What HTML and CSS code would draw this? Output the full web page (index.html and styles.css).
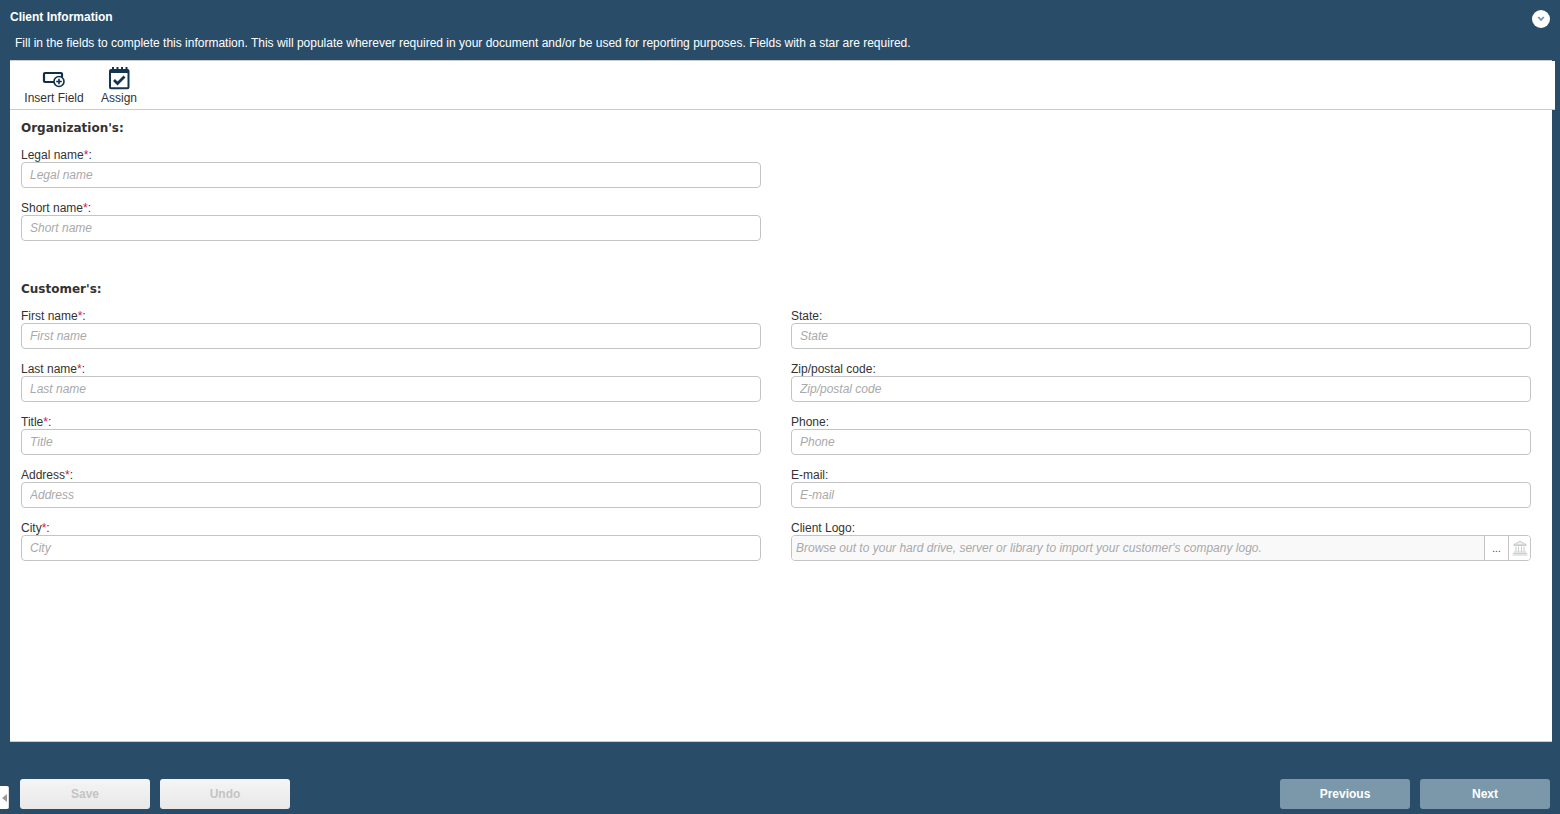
FILE: index.html
```html
<!DOCTYPE html>
<html lang="en">
<head>
<meta charset="utf-8">
<title>Client Information</title>
<link rel="stylesheet" href="styles.css">
</head>
<body>
<div class="page">
  <header class="head">
    <div class="title-row">
      <h1 class="title">Client Information</h1>
      <button class="collapse" aria-label="Collapse">
        <svg width="8" height="6" viewBox="0 0 8 6"><path d="M1.200 1 L4 4 L6.800 1" fill="none" stroke="#6f93a8" stroke-width="1.800"/></svg>
      </button>
    </div>
    <p class="intro">Fill in the fields to complete this information. This will populate wherever required in your document and/or be used for reporting purposes. Fields with a star are required.</p>
  </header>

  <main class="panel">
    <div class="toolbar">
      <div class="tool tool-insert">
        <svg class="tool-icon" width="24" height="24" viewBox="0 0 24 24">
          <path d="M13 16H3a1 1 0 0 1-1-1V8a1 1 0 0 1 1-1h16a1 1 0 0 1 1 1v3" fill="none" stroke="#0f2f4a" stroke-width="2.200"/>
          <circle cx="17" cy="15.500" r="5" fill="#fff" stroke="#0f2f4a" stroke-width="1.600"/>
          <path d="M17 12.700v5.600M14.200 15.500h5.600" stroke="#0f2f4a" stroke-width="1.600"/>
        </svg>
        <span>Insert Field</span>
      </div>
      <div class="tool tool-assign">
        <svg class="tool-icon" width="24" height="24" viewBox="0 0 24 24">
          <rect x="3" y="4" width="18.500" height="18.300" rx="1" fill="none" stroke="#14344f" stroke-width="2"/>
          <path d="M3 5.500h18.500" stroke="#14344f" stroke-width="3"/>
          <path d="M6 1v4M10.500 1v4M15 1v4M19.500 1v4" stroke="#14344f" stroke-width="2"/>
          <path d="M7 14l3.500 3.500 7-7" fill="none" stroke="#14344f" stroke-width="2.800"/>
        </svg>
        <span>Assign</span>
      </div>
    </div>

    <div class="form">
      <h2 class="section">Organization's:</h2>
      <div class="grid">
        <div class="col">
          <div class="field"><label>Legal name<b>*</b>:</label><input placeholder="Legal name"></div>
          <div class="field"><label>Short name<b>*</b>:</label><input placeholder="Short name"></div>
        </div>
      </div>

      <h2 class="section section-customer">Customer's:</h2>
      <div class="grid">
        <div class="col">
          <div class="field"><label>First name<b>*</b>:</label><input placeholder="First name"></div>
          <div class="field"><label>Last name<b>*</b>:</label><input placeholder="Last name"></div>
          <div class="field"><label>Title<b>*</b>:</label><input placeholder="Title"></div>
          <div class="field"><label>Address<b>*</b>:</label><input placeholder="Address"></div>
          <div class="field"><label>City<b>*</b>:</label><input placeholder="City"></div>
        </div>
        <div class="col">
          <div class="field"><label>State:</label><input placeholder="State"></div>
          <div class="field"><label>Zip/postal code:</label><input placeholder="Zip/postal code"></div>
          <div class="field"><label>Phone:</label><input placeholder="Phone"></div>
          <div class="field"><label>E-mail:</label><input placeholder="E-mail"></div>
          <div class="field"><label>Client Logo:</label>
            <div class="file">
              <input class="file-input" placeholder="Browse out to your hard drive, server or library to import your customer's company logo." readonly>
              <button class="file-btn file-dots">...</button>
              <button class="file-btn file-lib" aria-label="Library">
                <svg width="16" height="16" viewBox="0 0 16 16" fill="none" stroke="#c9cdcd" stroke-width="1">
                  <path d="M8 1.200 L14.500 4.800 H1.500 Z" fill="#eceeee"/>
                  <path d="M2 5.500h12M4 6.500v5M6.500 6.500v5M9.500 6.500v5M12 6.500v5"/>
                  <path d="M2 12h12M1 13.500h14M0.500 15h15"/>
                </svg>
              </button>
            </div>
          </div>
        </div>
      </div>
    </div>
  </main>

  <footer class="foot">
    <div class="handle"><span class="handle-arrow"></span></div>
    <div class="btn-group">
      <button class="btn btn-off">Save</button>
      <button class="btn btn-off">Undo</button>
    </div>
    <div class="btn-group">
      <button class="btn btn-nav">Previous</button>
      <button class="btn btn-nav">Next</button>
    </div>
  </footer>
</div>
</body>
</html>
```
FILE: styles.css
```css
* { box-sizing: border-box; }
html, body { margin: 0; height: 100%; }
body {
  background: #294d69;
  font-family: "Liberation Sans", Arial, sans-serif;
  font-size: 12px;
  color: #333;
  overflow: hidden;
}
.page { width: 1560px; height: 814px; display: flex; flex-direction: column; }
.head { height: 60px; padding: 10px 10px 0 10px; color: #fff; }
.title-row { display: flex; justify-content: space-between; height: 14px; }
.title { margin: 0; font-size: 12px; line-height: 14px; font-weight: 700; }
.collapse {
  width: 18px; height: 18px; margin: 0; padding: 0; border: 0; border-radius: 50%;
  background: #fff; display: flex; align-items: center; justify-content: center;
}
.intro { margin: 12px 0 0 5px; font-size: 12px; line-height: 14px; }

.panel {
  margin-left: 10px; width: 1542px; height: 682px; background: #fff;
  border-top: 1px solid #ccc; border-bottom: 1px solid #ccc;
  display: flex; flex-direction: column;
}
.toolbar {
  width: 1545px; height: 49px; background: #fff; border-bottom: 1px solid #ccc;
  display: flex; align-items: flex-start; flex: none;
}
.tool { display: flex; flex-direction: column; align-items: center; color: #333; line-height: 14px; padding-top: 5px; }
.tool-icon { display: block; margin-bottom: 1px; }
.tool-insert { margin-left: 14px; width: 60px; }
.tool-assign { margin-left: 16px; width: 38px; }

.form { padding: 10px 21px 0 11px; }
.section { margin: 0; font-family: "DejaVu Sans", Verdana, sans-serif; font-size: 12px; line-height: 16px; font-weight: 700; color: #333; }
.section-customer { margin-top: 31px; }
.grid { display: flex; gap: 30px; }
.col { width: 740px; padding-top: 8px; }
.field { height: 53px; padding-top: 4px; }
.field label { display: block; height: 14px; line-height: 14px; color: #333; }
.field label b { color: #d0164f; font-weight: 400; }
.field input {
  display: block; width: 100%; height: 26px; margin: 0; padding: 0 8px;
  border: 1px solid #c4c4c4; border-radius: 4px; background: #fff;
  font: italic 12px "Liberation Sans", Arial, sans-serif; color: #333; outline: 0;
}
.field input::placeholder { color: #a9a9a9; opacity: 1; }

.file { display: flex; height: 26px; border: 1px solid #c4c4c4; border-radius: 4px; overflow: hidden; background: #f9f9f9; }
.field input.file-input { flex: 1; min-width: 0; height: 24px; border: 0; border-radius: 0; padding: 0 4px; background: #f9f9f9; }
.file-btn {
  width: 24px; height: 24px; padding: 0; border: 0; border-left: 1px solid #c4c4c4; background: #fff;
  font: 12px "Liberation Sans", Arial, sans-serif; color: #5b2a6e;
  display: flex; align-items: center; justify-content: center; flex: none;
}
.file-dots { font-size: 10px; }
.file-lib { width: 22px; }

.foot { position: relative; display: flex; justify-content: space-between; padding: 37px 10px 0 20px; flex: 1; }
.btn-group { display: flex; gap: 10px; }
.btn {
  width: 130px; height: 30px; padding: 0; border: 0; border-radius: 3px;
  font: 700 12px "Liberation Sans", Arial, sans-serif;
}
.btn-off { background: linear-gradient(#f5f5f5, #e8e8e8); color: #c4c4c4; }
.btn-nav { background: #7a98a9; color: #fff; }
.handle {
  position: absolute; left: 0; top: 44px; width: 9px; height: 23px; background: #fff;
  border-right: 1px solid #ddd; border-radius: 0 2px 2px 0;
  display: flex; align-items: center; justify-content: center;
}
.handle-arrow { width: 0; height: 0; border-style: solid; border-width: 4px 5px 4px 0; border-color: transparent #999 transparent transparent; }
```
